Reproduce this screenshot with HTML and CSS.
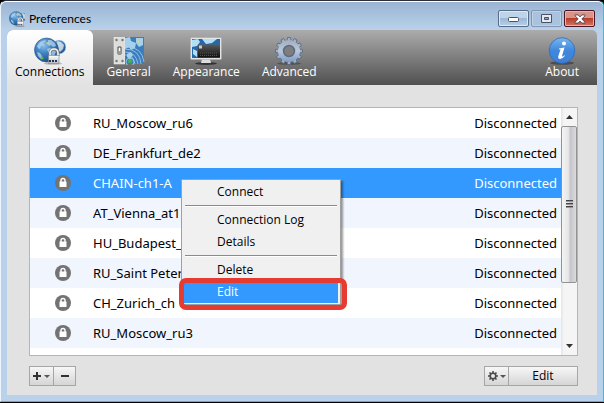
FILE: index.html
```html
<!DOCTYPE html>
<html lang="en">
<head>
<meta charset="utf-8">
<title>Preferences</title>
<link rel="stylesheet" href="styles.css">
</head>
<body>
<svg class="defs" aria-hidden="true">
  <defs>
    <radialGradient id="ocean" cx="38%" cy="30%" r="75%"><stop offset="0" stop-color="#8fc4ec"/><stop offset=".45" stop-color="#3f82c2"/><stop offset="1" stop-color="#1a4a86"/></radialGradient>
    <linearGradient id="metal" x2="0" y2="1"><stop offset="0" stop-color="#fff"/><stop offset="1" stop-color="#b4bac4"/></linearGradient>
    <linearGradient id="gearfill" gradientUnits="userSpaceOnUse" x1="0" y1="-13" x2="0" y2="13"><stop offset="0" stop-color="#a0a9b6"/><stop offset=".5" stop-color="#b9c9df"/><stop offset="1" stop-color="#7592bd"/></linearGradient>
    <linearGradient id="info" x2="0" y2="1"><stop offset="0" stop-color="#7ab6f0"/><stop offset=".5" stop-color="#3f88dc"/><stop offset="1" stop-color="#3f7fd6"/></linearGradient>
    <linearGradient id="screen" x2="0" y2="1"><stop offset="0" stop-color="#5a5a5a"/><stop offset="1" stop-color="#111"/></linearGradient>
    <symbol id="globe" viewBox="0 0 32 28">
      <circle cx="25" cy="10" r="7" fill="url(#ocean)" stroke="#dce8f0" stroke-width=".6"/>
      <path d="M23 4l4 1 3 3-1 4-3 3-2-3z" fill="#d5e2e8" opacity=".85"/>
      <circle cx="12.500" cy="13" r="12" fill="url(#ocean)" stroke="#2b5689" stroke-width=".6"/>
      <path d="M3 9l3-4 5-2 1 1-3 2 1 2-3 1-1 3-2-1zM14 3l3 0 4 3 1 3-3 1-2-2-2 1-1-2zM13 12l3-1 4 1 2 3-2 4-2 1-2-3-2-2zM3 15l3 1 2 3-1 3-3-3z" fill="#b4d6f0" opacity=".75"/>
      <path d="M12 5l3 1-1 2z" fill="#f2d86a"/><circle cx="8" cy="21" r="1.500" fill="#58c247"/>
      <ellipse cx="19" cy="26.500" rx="9" ry="1.300" fill="#555" opacity=".35"/>
      <path d="M16 19v-3a4 4 0 0 1 8 0v3" fill="none" stroke="#73787f" stroke-width="3"/>
      <path d="M16 19v-3a4 4 0 0 1 8 0v3" fill="none" stroke="#f3f3f3" stroke-width="1.600"/>
      <rect x="14.500" y="18.500" width="10.500" height="8" fill="url(#metal)" stroke="#7c838c" stroke-width=".6"/>
      <path d="M15 23h2v2h-2zM18 23h2v2h-2zM21 23h2v2h-2z" fill="#263447"/>
    </symbol>
    <symbol id="lock" viewBox="0 0 16 16">
      <circle cx="8" cy="8" r="8" fill="#737373"/>
      <path d="M6 7V5.500a2 2 0 0 1 4 0V7" fill="none" stroke="#fff" stroke-width="1.400"/>
      <rect x="4.500" y="6.500" width="7" height="5.500" fill="#fff"/>
    </symbol>
  </defs>
</svg>
<div class="window">
  <header class="titlebar">
    <svg class="title-icon" viewBox="0 0 28 28"><use href="#globe" width="32" height="28"/></svg>
    <h1 class="title">Preferences</h1>
    <div class="controls">
      <button class="control" aria-label="Minimize"><svg width="12" height="6"><rect x=".5" y="1.500" width="10" height="4" rx="1" fill="#fff" stroke="#4b5267"/></svg></button>
      <button class="control control-max" aria-label="Maximize" disabled><svg width="12" height="10"><path d="M.5.500h10v8H.5z" fill="#e4e9f0" stroke="#4b5267"/><path d="M3.500 3.500h4v2h-4z" fill="#86a8cb" stroke="#4b5267"/></svg></button>
      <button class="control control-close" aria-label="Close"><svg width="12" height="10" viewBox="0 0 13 11"><path d="M1 1h3.500l2 2.200L8.500 1H12v1L8.500 5.500 12 9v1H8.500l-2-2.200L4.500 10H1V9l3.500-3.500L1 2z" fill="#fff" stroke="#4b4555"/></svg></button>
    </div>
  </header>
  <main class="client">
    <nav class="toolbar">
      <button class="tab tab-active"><svg class="tab-icon"><use href="#globe"/></svg>Connections</button>
      <button class="tab"><svg class="tab-icon" viewBox="0 0 32 28">
        <rect x="1" width="11" height="27" fill="#dddedb" stroke="#f4f4f4" stroke-width=".5"/><rect x="12" width="19" height="27" fill="#3b7dbd"/>
        <path d="M12 1l5-1 1 4 5 2-1 5-4 2-2-3-4 2zM23 1h7v7l-4 2-3-4zM14 17l4-2 2 3-3 4-3-2z" fill="#a5d1ed"/><path d="M24 3l3 1-2 2z" fill="#f3d35d"/>
        <g fill="none" stroke="#a5cdec" stroke-width=".8"><circle cx="17" cy="25" r="4"/><path d="M12 18q8-1 10 9M12 15q11 0 13 12M12 12q15 0 16 15M14 10q15 0 17 15"/></g>
        <circle cx="17" cy="24" r="2" fill="#3fbd43"/><path d="M5 10h3v7H5z" fill="#fff" stroke="#444"/><path d="M5 14h3v3H5z" fill="#999"/>
        <g fill="#777"><circle cx="3.500" cy="3" r="1.200"/><circle cx="9.500" cy="3" r="1.200"/><circle cx="3.500" cy="24" r="1.200"/><circle cx="9.500" cy="24" r="1.200"/></g>
      </svg>General</button>
      <button class="tab"><svg class="tab-icon" viewBox="0 0 32 28">
        <ellipse cx="16" cy="26.500" rx="11" ry="1.500" fill="#333"/><path d="M12 22h8l1 4H11z" fill="#ddd"/>
        <rect x=".5" y=".5" width="31" height="22" rx="1" fill="#e3e5e7" stroke="#aaa" stroke-width=".6"/><rect x="2" y="2" width="28" height="19" fill="#2468ac"/>
        <path d="M2 3l6-1 2 3-3 4-5 1zM12 2h15l-5 4-6 1zM3 12l4 2v6l-4-3z" fill="#b4def5"/><rect x="8" y="7.500" width="22" height="13" fill="url(#screen)"/><rect x="9" y="8.500" width="3" height="3" fill="#ccc"/>
        <path d="M10 16h17M10 18.500h17" stroke="#555" stroke-dasharray="1 1"/>
      </svg>Appearance</button>
      <button class="tab"><svg class="tab-icon" viewBox="-16 -14 32 28">
        <ellipse cy="12.500" rx="12" ry="1.500" fill="#333" opacity=".5"/>
        <g fill="#9db1ce" stroke="#57687f" stroke-width=".8"><path id="tooth" d="M-2-10l.5-3.500h3l.5 3.500V10l-.5 3.500h-3L-2 10z"/><use href="#tooth" transform="rotate(30)"/><use href="#tooth" transform="rotate(60)"/><use href="#tooth" transform="rotate(90)"/><use href="#tooth" transform="rotate(120)"/><use href="#tooth" transform="rotate(150)"/></g>
        <circle r="11" fill="url(#gearfill)"/><circle r="5.500" fill="#7e7e7e" stroke="#5e6b7c" stroke-width="1.500"/>
      </svg>Advanced</button>
      <button class="tab tab-about"><svg class="tab-icon" viewBox="0 0 32 28">
        <ellipse cx="16" cy="26" rx="12" ry="1.800" fill="#333" opacity=".6"/><circle cx="16" cy="13.500" r="12.800" fill="url(#info)" stroke="#2c6cc0" stroke-width=".8"/>
        <circle cx="18" cy="6.500" r="2" fill="#fff"/><path d="M13 11.500l5.500-1-2.500 8.500q0 1.500 2.500-.8l.5.600q-3 3.700-5.500 3.200-2-.5-1-3.500l2-6-1.800-.2z" fill="#fff"/>
      </svg>About</button>
    </nav>
    <section class="content">
      <div class="list">
        <div class="rows">
          <table class="connections">
            <tbody>
              <tr><td class="state"><svg class="lock"><use href="#lock"/></svg></td><td>RU_Moscow_ru6</td><td class="status">Disconnected</td></tr>
              <tr><td class="state"><svg class="lock"><use href="#lock"/></svg></td><td>DE_Frankfurt_de2</td><td class="status">Disconnected</td></tr>
              <tr class="selected"><td class="state"><svg class="lock"><use href="#lock"/></svg></td><td>CHAIN-ch1-A</td><td class="status">Disconnected</td></tr>
              <tr><td class="state"><svg class="lock"><use href="#lock"/></svg></td><td>AT_Vienna_at1</td><td class="status">Disconnected</td></tr>
              <tr><td class="state"><svg class="lock"><use href="#lock"/></svg></td><td>HU_Budapest_</td><td class="status">Disconnected</td></tr>
              <tr><td class="state"><svg class="lock"><use href="#lock"/></svg></td><td>RU_Saint Peter</td><td class="status">Disconnected</td></tr>
              <tr><td class="state"><svg class="lock"><use href="#lock"/></svg></td><td>CH_Zurich_ch</td><td class="status">Disconnected</td></tr>
              <tr><td class="state"><svg class="lock"><use href="#lock"/></svg></td><td>RU_Moscow_ru3</td><td class="status">Disconnected</td></tr>
            </tbody>
          </table>
        </div>
        <div class="scrollbar">
          <svg class="arrow" viewBox="0 0 7 4"><path d="M3.500 0L7 4H0z" fill="#333"/></svg>
          <div class="thumb"><svg width="7" height="9"><path d="M0 .5h7M0 3.500h7M0 6.500h7" stroke="#444"/><path d="M0 1.500h7M0 4.500h7M0 7.500h7" stroke="#999"/></svg></div>
          <svg class="arrow" viewBox="0 0 7 4"><path d="M0 0h7L3.500 4z" fill="#333"/></svg>
        </div>
        <div class="menu" role="menu">
          <button class="item" role="menuitem">Connect</button>
          <hr class="separator">
          <button class="item" role="menuitem">Connection Log</button>
          <button class="item" role="menuitem">Details</button>
          <hr class="separator">
          <button class="item" role="menuitem">Delete</button>
          <button class="item item-active" role="menuitem">Edit</button>
          <div class="marker"></div>
        </div>
      </div>
      <footer class="actions">
        <div class="group">
          <button class="action action-small" aria-label="Add"><svg width="17" height="10"><path d="M0 5h8M4 1v8" stroke="#333" stroke-width="2"/><path d="M11 4h6l-3 3z" fill="#555"/></svg></button>
          <button class="action action-remove" aria-label="Remove"><svg width="8" height="10"><path d="M0 5h8" stroke="#333" stroke-width="2"/></svg></button>
        </div>
        <div class="group">
          <button class="action action-small" aria-label="Options"><svg width="18" height="10"><circle cx="5" cy="5" r="2.800" fill="none" stroke="#4a4a4a" stroke-width="1.600"/><path d="M5 0v2M5 8v2M0 5h2M8 5h2M1.500 1.500l1.400 1.400M7.100 7.100l1.400 1.400M1.500 8.500l1.400-1.400M7.100 2.900l1.400-1.400" stroke="#4a4a4a" stroke-width="1.600"/><path d="M12 4h6l-3 3z" fill="#555"/></svg></button>
          <button class="action action-edit">Edit</button>
        </div>
      </footer>
    </section>
  </main>
</div>
</body>
</html>
```

FILE: styles.css
```css
* { box-sizing: border-box; }
body { margin: 0; background: #000; font-family: "Open Sans", "Noto Sans", sans-serif; color: #000; }
button { margin: 0; padding: 0; border: 0; background: none; font: inherit; color: inherit; }
svg { display: block; flex: none; }
.defs { position: absolute; width: 0; height: 0; }

.window {
  display: flex;
  flex-direction: column;
  min-height: calc(100vh - 1px);
  padding: 0 5px 6px 6px;
  border: 1px solid #35c0dd;
  border-top-color: #2e2c38;
  border-left-color: #eef5fb;
  border-radius: 6px 6px 0 0;
  background: linear-gradient(#98b3d2, #b9d1ea 29px);
  box-shadow: inset 0 1px #fff;
}
.titlebar { display: flex; height: 29px; padding-left: 2px; }
.title-icon { width: 16px; height: 16px; margin-top: 10px; }
.title { flex: 1; margin: 8px 0 0 4px; font-family: Lato, "Open Sans", sans-serif; font-size: 12px; font-weight: 400; line-height: 20px; }
.controls { display: flex; gap: 2px; margin: 9px 3px 0 0; }
.control {
  display: grid;
  place-items: center;
  width: 31px;
  height: 17px;
  border: 1px solid #576b89;
  border-radius: 2px;
  background: linear-gradient(#bfd3e9 50%, #9cb8d6 50%, #b8d0e8);
  box-shadow: inset 0 0 0 1px #dce9f6;
}
.control-max { border-color: #8195b1; background: #a9c3df; box-shadow: inset 0 0 0 1px #bfd3e8; }
.control-close { border-color: #4d1625; background: linear-gradient(#d89488 48%, #b83d28 50%, #cf7767); box-shadow: inset 0 0 0 1px #e8b5ac; }

.client { flex: 1; display: flex; flex-direction: column; margin-right: 1px; border-radius: 5px 5px 0 0; background: #e2e2e2; }
.toolbar { display: flex; height: 55px; background: linear-gradient(#acacac, #505050); border-radius: 5px 5px 0 0; }
.tab {
  display: flex;
  flex-direction: column;
  align-items: center;
  padding: 7px 8px 0;
  font-size: 12px;
  line-height: 14px;
  color: #fff;
}
.tab + .tab { padding: 7px 11px 0; }
.tab:nth-child(2) { margin-left: 3px; }
.tab.tab-about { margin-left: auto; padding-right: 18px; }
.tab-active { border-radius: 6px 6px 0 0; background: linear-gradient(#fff, #e2e2e2); color: #000; }
.tab-icon { width: 32px; height: 28px; }

.content { flex: 1; display: flex; flex-direction: column; padding: 22px 19px 9px 22px; }
.list { position: relative; flex: 1; display: flex; border: 1px solid #b5b5b5; background: #fff; }
.rows { flex: 1; }
.connections { width: 100%; border-collapse: collapse; font-family: "Noto Sans", "Open Sans", sans-serif; font-size: 13px; line-height: 18px; }
td { height: 30px; padding: 0; white-space: nowrap; }
tr:nth-child(even) { background: #f0f5fe; }
tr.selected { background: #3399ff; color: #fff; }
.state { width: 63px; padding-left: 25px; }
.lock { width: 16px; height: 16px; }
.status { padding-right: 4px; text-align: right; }
.scrollbar {
  display: flex;
  flex-direction: column;
  align-items: center;
  width: 16px;
  background: linear-gradient(90deg, #e4e4e4, #f5f5f5 3px);
}
.arrow { width: 7px; height: 4px; margin: 7px 0; }
.thumb {
  flex: 0 0 157px;
  align-self: stretch;
  display: grid;
  place-items: center;
  border: 1px solid #929292;
  border-radius: 2px;
  background: linear-gradient(90deg, #f4f4f4, #e6e6e8 45%, #c5c5ca 60%, #dcdcde);
}
.thumb + .arrow { margin-top: auto; }

.menu {
  position: absolute;
  left: 151px;
  top: 71px;
  width: 160px;
  padding: 1px 2px;
  border: 1px solid #a0a0a0;
  background: #f0f0f0;
  box-shadow: 2px 2px 2px rgba(0, 0, 0, .4);
  font-size: 12px;
}
.item { display: block; width: 100%; height: 22px; padding-left: 33px; line-height: 20px; text-align: left; }
.item-active { background: #3399ff; color: #fff; }
.separator { height: 6px; margin: 0 1px; border: 0; background: linear-gradient(transparent 2px, #8a8a8a 2px, #8a8a8a 3px, #fff 3px, #fff 4px, transparent 4px); }
.marker { position: absolute; inset: auto -7px -6px -3px; height: 32px; border: 5px solid #e53b30; border-radius: 7px; pointer-events: none; }

.actions { display: flex; justify-content: space-between; padding-top: 10px; }
.group { display: flex; }
.action {
  display: grid;
  place-items: center;
  height: 20px;
  border: 1px solid #a6a6a6;
  background: linear-gradient(#f7f7f7, #d5d5d5);
  font-size: 12px;
  line-height: 18px;
}
.action + .action { border-left: 0; }
.action-small { width: 25px; }
.action-remove { width: 22px; }
.action-edit { width: 69px; }
```
